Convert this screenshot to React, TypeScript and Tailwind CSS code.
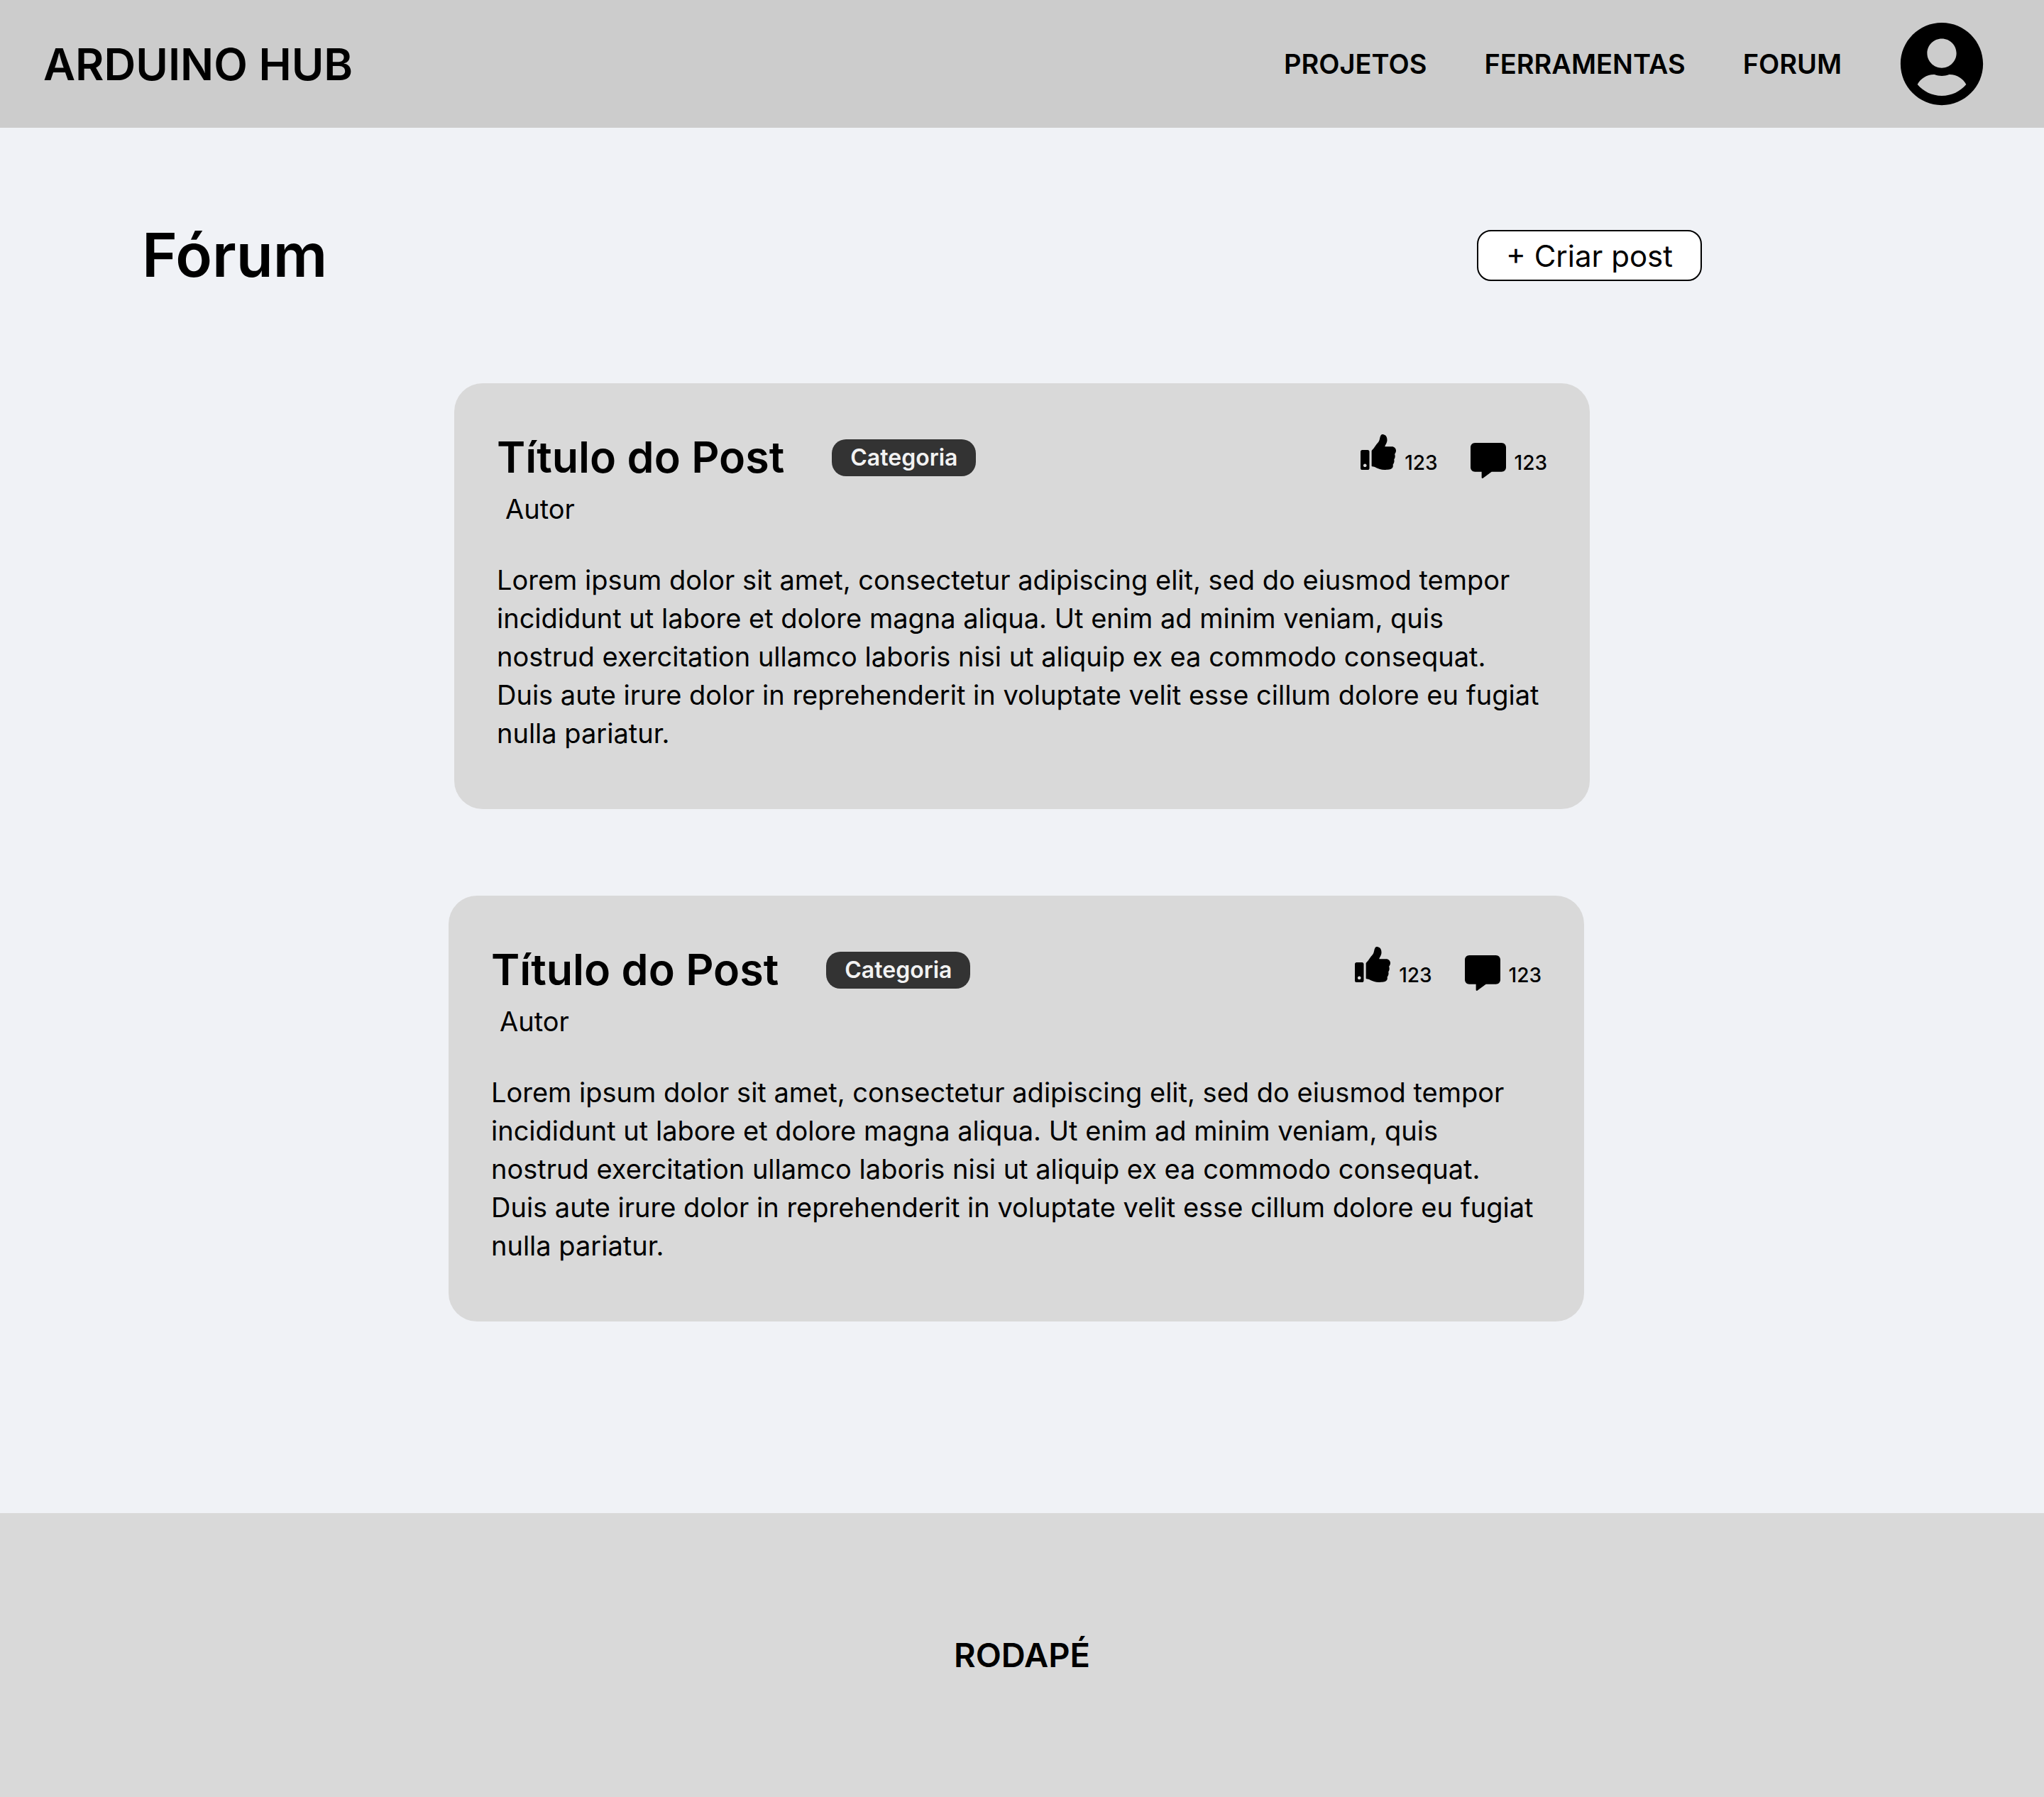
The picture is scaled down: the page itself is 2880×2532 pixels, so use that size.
import { FaCommentAlt, FaThumbsUp, FaUserCircle } from "react-icons/fa";

const posts = [
  { id: 1, place: "pr-0" },
  { id: 2, place: "pr-4" },
];

function Post({ place }: { place: string }) {
  return (
    <div className={`flex justify-center ${place}`}>
      <article className="min-h-[600px] w-full max-w-[1600px] rounded-[40px] bg-[#d9d9d9] px-[60px] pt-[60px]">
        <div className="flex h-[90px] items-center">
          <h2 className="text-[61px] font-semibold">Título do Post</h2>
          <span className="ml-[67px] flex h-[52px] items-center rounded-[20px] bg-[#333333] px-[26px] text-[32px] font-semibold text-[#f2f2f2]">
            Categoria
          </span>
          <div className="ml-auto flex items-start gap-[46px] self-stretch text-[28px] leading-none font-medium">
            <button type="button" aria-label="Curtir" className="mt-3 flex items-baseline gap-3">
              <FaThumbsUp size={50} />
              <span>123</span>
            </button>
            <button type="button" aria-label="Comentar" className="mt-6 flex items-end gap-3">
              <FaCommentAlt size={50} />
              <span className="mb-2">123</span>
            </button>
          </div>
        </div>
        <p className="ml-3 text-[38px] leading-[54px]">Autor</p>
        <p className="mt-[46px] text-[38px] leading-[54px]">
          Lorem ipsum dolor sit amet, consectetur adipiscing elit, sed do eiusmod tempor
          <br />
          incididunt ut labore et dolore magna aliqua. Ut enim ad minim veniam, quis
          <br />
          nostrud exercitation ullamco laboris nisi ut aliquip ex ea commodo consequat.
          <br />
          Duis aute irure dolor in reprehenderit in voluptate velit esse cillum dolore eu fugiat
          <br />
          nulla pariatur.
        </p>
      </article>
    </div>
  );
}

export default function App() {
  return (
    <div className="flex min-h-screen flex-col bg-[#f0f2f6] font-['Inter',sans-serif] text-black">
      <header className="flex h-[180px] items-center bg-[#cccccc] pr-[84px] pl-[61px]">
        <a href="#" className="text-[62px] font-semibold">ARDUINO HUB</a>
        <nav className="ml-auto flex items-center gap-[81px] text-[38px] font-semibold">
          <a href="#projetos">PROJETOS</a>
          <a href="#ferramentas">FERRAMENTAS</a>
          <a href="#forum">FORUM</a>
          <a href="#perfil" aria-label="Perfil"><FaUserCircle size={120} /></a>
        </nav>
      </header>
      <main className="flex-1">
        <div className="mt-[120px] flex h-[120px] items-center justify-between pr-[482px] pl-[200px]">
          <h1 className="text-[85px] font-semibold">Fórum</h1>
          <button type="button" className="h-[72px] rounded-[20px] border-2 border-black bg-white px-[39px] text-[42px]">+ Criar post</button>
        </div>
        <div className="mt-[120px] flex flex-col gap-[122px]">
          {posts.map((p) => <Post key={p.id} place={p.place} />)}
        </div>
      </main>
      <footer className="flex h-[400px] items-center justify-center bg-[#d9d9d9] text-[47px] font-semibold">RODAPÉ</footer>
    </div>
  );
}
